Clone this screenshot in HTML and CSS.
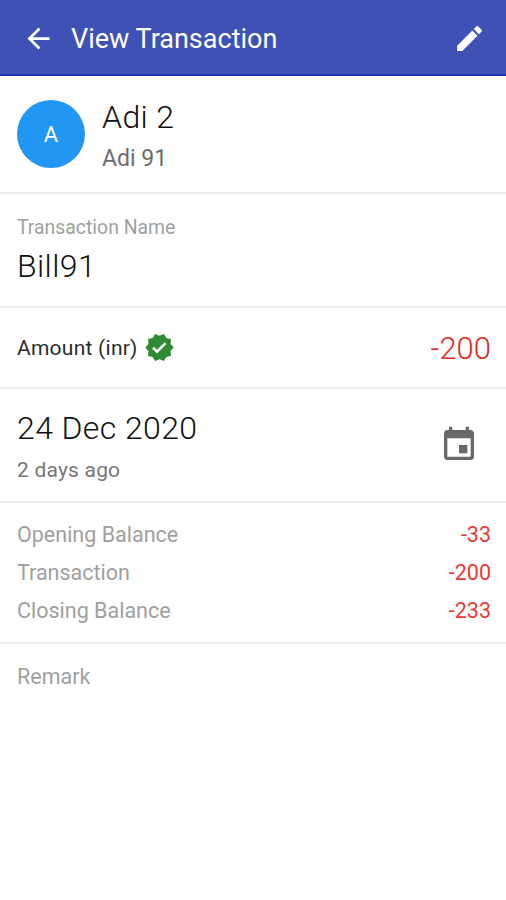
FILE: index.html
```html
<!DOCTYPE html>
<html lang="en">
<head>
    <meta charset="UTF-8">
    <meta name="viewport" content="width=device-width, initial-scale=1.0">
    <title>View Transaction</title>
    <link rel="stylesheet" href="styles.css">
</head>
<body>
    <header class="app-bar">
        <svg class="icon" viewBox="0 0 24 24"><path d="M20 11H7.83l5.59-5.59L12 4l-8 8 8 8 1.41-1.41L7.83 13H20v-2z"/></svg>
        <h1>View Transaction</h1>
        <svg class="icon" viewBox="0 0 24 24"><path d="M3 17.25V21h3.75L17.81 9.94l-3.75-3.75L3 17.25zM20.71 7.04c.39-.39.39-1.02 0-1.41l-2.34-2.34c-.39-.39-1.02-.39-1.41 0l-1.83 1.83 3.75 3.75 1.83-1.83z"/></svg>
    </header>
    <main>
        <section class="person">
            <div class="avatar">A</div>
            <div>
                <h2>Adi 2</h2>
                <p class="sub-title">Adi 91</p>
            </div>
        </section>
        <section class="name">
            <p class="label">Transaction Name</p>
            <h2 class="bill">Bill91</h2>
        </section>
        <section class="amount">
            <span class="amount-label">Amount (inr)</span>
            <svg class="verified" viewBox="0 0 24 24"><path d="M23 12l-2.44-2.79.34-3.69-3.61-.82-1.89-3.2L12 2.96 8.6 1.5 6.71 4.69 3.1 5.5l.34 3.7L1 12l2.44 2.79-.34 3.7 3.61.82L8.6 22.5l3.4-1.47 3.4 1.46 1.89-3.19 3.61-.82-.34-3.69L23 12zm-12.91 4.72l-3.8-3.81 1.48-1.48 2.32 2.33 5.85-5.87 1.48 1.48-7.33 7.35z"/></svg>
            <span class="amount-value">-200</span>
        </section>
        <section class="date">
            <div>
                <h2>24 Dec 2020</h2>
                <p class="days">2 days ago</p>
            </div>
            <svg class="calendar" viewBox="0 0 24 24"><path d="M17 12h-5v5h5v-5zM16 1v2H8V1H6v2H5c-1.11 0-1.99.9-1.99 2L3 19c0 1.1.89 2 2 2h14c1.1 0 2-.9 2-2V5c0-1.1-.9-2-2-2h-1V1h-2zm3 18H5V8h14v11z"/></svg>
        </section>
        <section class="balance">
            <div class="row"><span>Opening Balance</span><span class="minus">-33</span></div>
            <div class="row"><span>Transaction</span><span class="minus">-200</span></div>
            <div class="row"><span>Closing Balance</span><span class="minus">-233</span></div>
        </section>
        <section class="remark">Remark</section>
    </main>
</body>
</html>
```
FILE: styles.css
```css
:root {
    --color-primary: #3f51b5;
    --color-avatar: #2196f3;
    --color-text: #111;
    --color-grey: #a0a0a0;
    --color-line: #ececec;
    --color-minus: #ea3a32;
}

* {
    padding: 0;
    margin: 0;
    box-sizing: border-box;
}

body {
    background: #fff;
    color: var(--color-text);
    font-family: Roboto, sans-serif;
}

.app-bar {
    height: 76px;
    padding: 2px 20px 0 22px;
    display: flex;
    align-items: center;
    background: var(--color-primary);
    border-bottom: 2px solid #1a36a5;
    color: #fff;
}

.app-bar h1 {
    flex: 1;
    margin-left: 16px;
    padding-top: 1px;
    font-size: 27px;
    font-weight: 400;
}

.icon {
    width: 33px;
    height: 33px;
    fill: #fff;
}

section {
    padding: 0 15px 0 17px;
    border-bottom: 2px solid var(--color-line);
}

h2 {
    font-size: 32px;
    line-height: 40px;
    font-weight: 300;
    letter-spacing: 0.4px;
}

.person {
    height: 118px;
    padding-top: 21px;
    display: flex;
}

.avatar {
    width: 68px;
    height: 68px;
    margin-top: 3px;
    margin-right: 17px;
    border-radius: 50%;
    background: var(--color-avatar);
    color: #fff;
    font-size: 22px;
    line-height: 69px;
    text-align: center;
}

.sub-title {
    color: #6c6c6c;
    font-size: 23px;
    line-height: 43px;
}

.name {
    height: 114px;
    padding-top: 20px;
}

.label {
    color: var(--color-grey);
    font-size: 19.4px;
    line-height: 28px;
}

.bill {
    margin-top: 4px;
}

.amount {
    height: 81px;
    display: flex;
    align-items: center;
}

.amount-label {
    color: #2b2b2b;
    font-size: 21px;
    letter-spacing: 0.25px;
}

.verified {
    width: 31px;
    height: 31px;
    margin-left: 6px;
    fill: #2e8b34;
}

.amount-value {
    margin-left: auto;
    padding-top: 1px;
    color: #e5281f;
    font-size: 31px;
    font-weight: 300;
}

.date {
    height: 114px;
    padding-top: 19px;
    display: flex;
    justify-content: space-between;
}

.days {
    color: #777;
    font-size: 21px;
    line-height: 44px;
    letter-spacing: 0.2px;
}

.calendar {
    width: 40px;
    height: 40px;
    margin-top: 17px;
    margin-right: 12px;
    fill: #686868;
}

.balance {
    height: 141px;
    padding-top: 13px;
}

.row {
    display: flex;
    justify-content: space-between;
    color: var(--color-grey);
    font-size: 21.5px;
    line-height: 38px;
}

.minus {
    color: var(--color-minus);
}

.remark {
    border-bottom: none;
    color: var(--color-grey);
    font-size: 21.5px;
    line-height: 66px;
}
```
